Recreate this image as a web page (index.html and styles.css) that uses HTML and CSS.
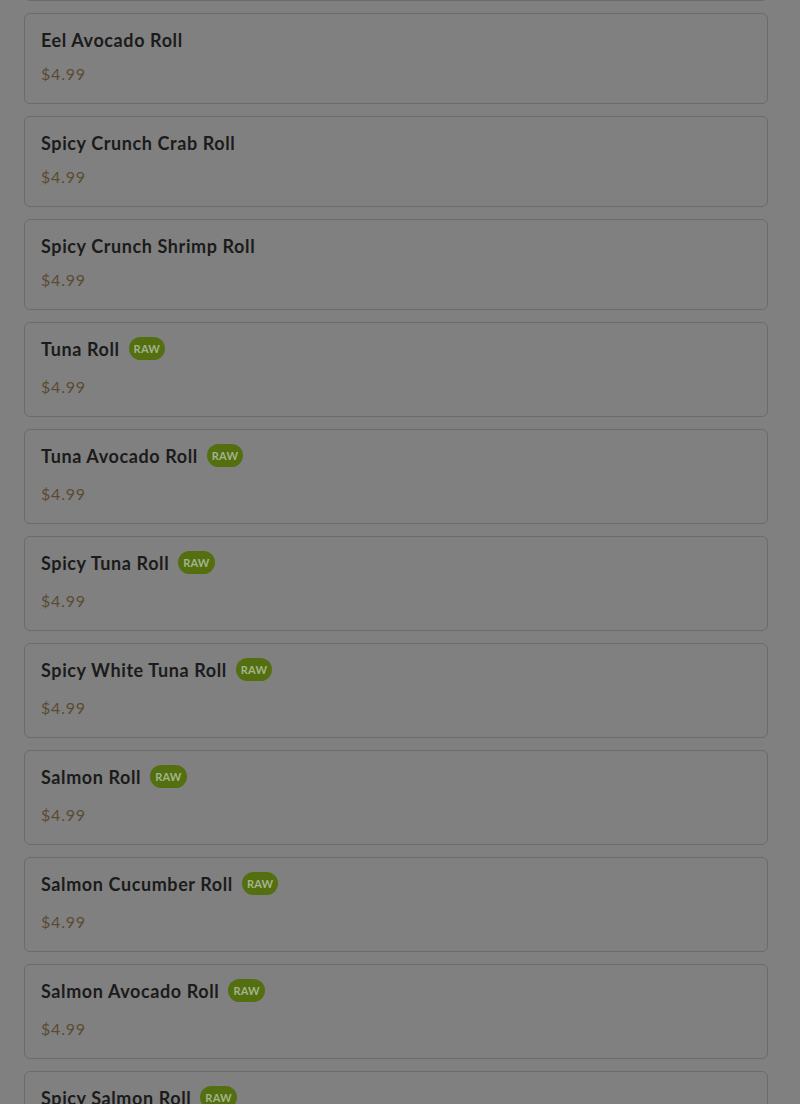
FILE: index.html
```html
<!DOCTYPE html>
<html lang="en">
	<head>
		<meta charset="UTF-8" />
		<meta name="viewport" content="width=device-width, initial-scale=1.0" />
		<title>Menu</title>
		<link rel="stylesheet" href="styles.css">
	</head>
	<body>
		<div class="menu">
			<div class="item item-cut"></div>
			<div class="item">
				<div class="item-head"><span class="item-name">Eel Avocado Roll</span></div>
				<div class="item-price">$4.99</div>
			</div>
			<div class="item">
				<div class="item-head"><span class="item-name">Spicy Crunch Crab Roll</span></div>
				<div class="item-price">$4.99</div>
			</div>
			<div class="item">
				<div class="item-head"><span class="item-name">Spicy Crunch Shrimp Roll</span></div>
				<div class="item-price">$4.99</div>
			</div>
			<div class="item">
				<div class="item-head"><span class="item-name">Tuna Roll</span><span class="tag">RAW</span></div>
				<div class="item-price">$4.99</div>
			</div>
			<div class="item">
				<div class="item-head"><span class="item-name">Tuna Avocado Roll</span><span class="tag">RAW</span></div>
				<div class="item-price">$4.99</div>
			</div>
			<div class="item">
				<div class="item-head"><span class="item-name">Spicy Tuna Roll</span><span class="tag">RAW</span></div>
				<div class="item-price">$4.99</div>
			</div>
			<div class="item">
				<div class="item-head"><span class="item-name">Spicy White Tuna Roll</span><span class="tag">RAW</span></div>
				<div class="item-price">$4.99</div>
			</div>
			<div class="item">
				<div class="item-head"><span class="item-name">Salmon Roll</span><span class="tag">RAW</span></div>
				<div class="item-price">$4.99</div>
			</div>
			<div class="item">
				<div class="item-head"><span class="item-name">Salmon Cucumber Roll</span><span class="tag">RAW</span></div>
				<div class="item-price">$4.99</div>
			</div>
			<div class="item">
				<div class="item-head"><span class="item-name">Salmon Avocado Roll</span><span class="tag">RAW</span></div>
				<div class="item-price">$4.99</div>
			</div>
			<div class="item">
				<div class="item-head"><span class="item-name">Spicy Salmon Roll</span><span class="tag">RAW</span></div>
				<div class="item-price">$4.99</div>
			</div>
		</div>
	</body>
</html>
```
FILE: styles.css
```css
html,
body {
	height: 100%;
}
body {
	margin: 0;
	background: #808080;
	color: #1b1b1b;
	font-family: "Lato", "Noto Sans", sans-serif;
	overflow: hidden;
}
.menu {
	display: flex;
	flex-direction: column;
	gap: 12px;
	margin-top: -80px;
	padding: 0 32px 0 24px;
}
.item {
	border: 1px solid #6b6b6b;
	border-radius: 6px;
	padding: 14px 16px 17px;
}
/* the card scrolled past the top edge */
.item-cut {
	height: 48px;
	flex: none;
}
.item-head {
	display: flex;
	align-items: flex-start;
	gap: 9px;
	margin-bottom: 10px;
}
.item-name {
	font-size: 18px;
	font-weight: 700;
	line-height: 24px;
	letter-spacing: 0.6px;
}
.tag {
	height: 23px;
	margin-bottom: 5px;
	padding: 0 5px;
	border-radius: 12px;
	background: #536f0f;
	color: #a3b38d;
	font-size: 11px;
	font-weight: 700;
	line-height: 23px;
	letter-spacing: 0.2px;
}
.item-price {
	font-size: 16px;
	line-height: 24px;
	letter-spacing: 0.8px;
	color: #5b4b31;
}
```
